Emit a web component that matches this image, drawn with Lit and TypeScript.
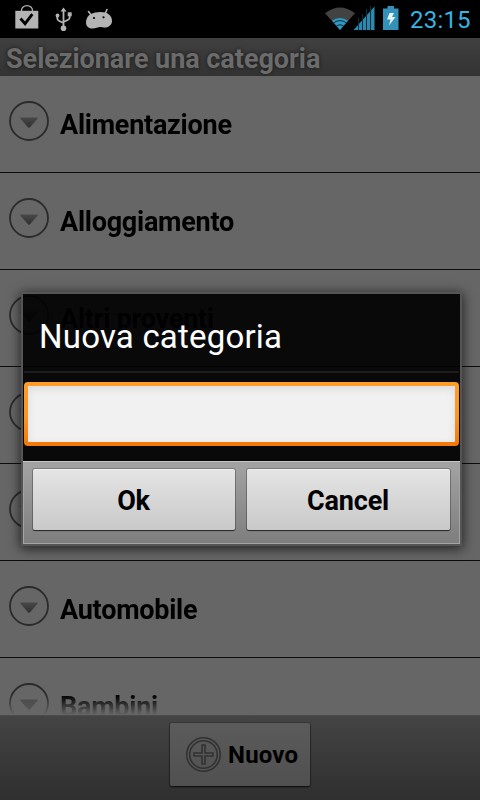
import { LitElement, html, css } from "lit";
import { customElement, property } from "lit/decorators.js";

@customElement("status-bar")
class StatusBar extends LitElement {
  static styles = css`
    :host { display: flex; height: 38px; background: #000; justify-content: space-between; }
    svg { display: block; }
    .side { display: flex; }
    .clock {
      width: 61px; margin-left: 10px; margin-right: 9px; white-space: nowrap;
      font: 400 24px/41px Roboto, sans-serif; letter-spacing: 0.2px; color: #33b5e5;
    }
  `;
  render() {
    return html`
      <svg width="120" height="38" viewBox="0 0 120 38">
        <path d="M21.500 11V10.500a5.500 4.800 0 0 1 11 0V11" fill="none" stroke="#b4b4b4" stroke-width="1.300"/>
        <path d="M15.300 10.800H38.300V28.500H15.300Z" fill="#b4b4b4"/>
        <path d="M20.500 18.500l4.600 5.200 7.200-9.500" fill="none" stroke="#000" stroke-width="2.800"/>
        <g fill="none" stroke="#b4b4b4" stroke-width="1.800">
          <path d="M63.500 10V28M57.300 16v2.500q0 1.500 2 2.500l4.200 2M69.700 15v2.500q0 1.500-2 2.500l-4.200 2"/>
        </g>
        <path d="M63.500 7.500l3 4h-6Z" fill="#b4b4b4"/>
        <circle cx="57.500" cy="15.500" r="1.900" fill="#b4b4b4"/>
        <path d="M67.700 12.300h4v4h-4Z" fill="#b4b4b4"/>
        <circle cx="63.500" cy="28.300" r="2.800" fill="#b4b4b4"/>
        <path d="M88.500 11.500l3 4M107 9.500l-2 4.500" stroke="#b4b4b4" stroke-width="1.600" stroke-linecap="round"/>
        <path d="M86 22.500C86 16.500 90 12.800 98 12.200C107 11.500 112 15 112 21c0 4-3.500 6.600-7.500 6.600-1.500 0-2.500-.6-4.500-.6s-4 1.500-7.500 1.500S86 26.500 86 22.500Z" fill="#b4b4b4"/>
        <circle cx="94" cy="18" r="1.100"/><circle cx="103.500" cy="17.300" r="1.100"/>
      </svg>
      <div class="side">
        <svg width="75" height="38" viewBox="0 0 75 38">
          <path d="M0 13.300Q15 1.500 30 13.300L15 30Z" fill="#424242"/>
          <path d="M7 20.600Q15 15.300 23 20.600L15 30Z" fill="#3099c4"/>
          <path d="M8.800 22.700q6.200-4.200 12.400 0M11.500 25.800q3.500-2.200 7 0" fill="none" stroke="#0b2c3a" stroke-width="1"/>
          <path d="M28.500 30L49.500 6.500V30Z" fill="#2b89ae"/>
          <path d="M33.500 18v12.500M37.500 14v16.500M41.500 9v21.500M45.500 6v24.500" stroke="#0a3040" stroke-width="1"/>
          <path d="M62.500 6h6.500v2.500h4.500V30h-15.500V8.500h4.500Z" fill="#3492b8"/>
          <path d="M64.500 13h4.500l-2 4h3.500l-6.500 8.500 1.500-6h-3.500Z" fill="#e6f3f8"/>
        </svg>
        <div class="clock">23:15</div>
      </div>`;
  }
}

@customElement("category-row")
class CategoryRow extends LitElement {
  @property() label = "";
  static styles = css`
    :host {
      display: flex; box-sizing: border-box; flex: none; height: 97px;
      border-bottom: 1px solid #0c0c0c; padding-left: 8px;
    }
    svg { display: block; margin-top: 24px; }
    .label {
      margin-left: 10px; font: 700 27px/99px Roboto, sans-serif;
      letter-spacing: -0.25px; color: #000; white-space: nowrap;
    }
  `;
  render() {
    return html`
      <svg width="42" height="42" viewBox="0 0 42 42">
        <defs><linearGradient id="g" x1="0" y1="0" x2="0" y2="1">
          <stop offset="0" stop-color="#484848"/><stop offset="1" stop-color="#303030"/>
        </linearGradient></defs>
        <circle cx="21" cy="21" r="19" fill="none" stroke="#2b2b2b" stroke-width="1.800"/>
        <path d="M13 17.500h16q1.500 0 .5 1.200l-7.500 8.600q-1 1-2 0l-7.500-8.600q-1-1.200 .5-1.200Z" fill="url(#g)"/>
      </svg>
      <div class="label">${this.label}</div>`;
  }
}

@customElement("category-dialog")
class CategoryDialog extends LitElement {
  static styles = css`
    :host {
      display: flex; flex-direction: column; box-sizing: border-box;
      width: 441px; height: 254px; border: 2px solid #555; border-radius: 2px;
      box-shadow: 0 2px 12px 1px rgba(0, 0, 0, .65);
    }
    .top {
      height: 167px; flex: none; padding: 0 1px; box-sizing: border-box;
      background: rgba(0, 0, 0, .905);
    }
    .title {
      height: 77px; box-sizing: border-box; padding-left: 15px; color: #fff; white-space: nowrap;
      font: 400 33px/85px Roboto, sans-serif; letter-spacing: 0.2px;
    }
    .rule { height: 2px; background: #1d1d1d; }
    .field {
      height: 64px; margin-top: 9px; padding: 4px; box-sizing: border-box; border-radius: 4px;
      background: linear-gradient(#ff9d2a, #fb9422 55%, #f27a0a 95%);
    }
    .inner { height: 56px; background: #f1f1f1; box-shadow: inset 0 3px 8px rgba(0, 0, 0, .09); }
    .actions {
      flex: 1; display: flex; justify-content: space-between; padding: 7px 10px 12px; box-sizing: border-box;
      border-top: 1px solid #c4c4c4; border-bottom: 1px solid #a4a4a4;
      background: linear-gradient(#a3a3a3, #7e7e7e);
      box-shadow: inset 1px 0 #a4a4a4, inset -1px 0 #a4a4a4;
    }
    .btn {
      width: 202px; height: 61px; box-sizing: border-box; border-radius: 2px; text-align: center;
      color: #000; background: linear-gradient(#e4e4e4, #c9c9c9); border-top: 1px solid #f0f0f0;
      font: 700 27px/63px Roboto, sans-serif; letter-spacing: -0.15px; text-indent: -1px;
      box-shadow: 0 0 0 1px rgba(0, 0, 0, .22), 0 1px 1px rgba(0, 0, 0, .65);
    }
    .btn + .btn { width: 203px; }
  `;
  render() {
    return html`
      <div class="top">
        <div class="title">Nuova categoria</div>
        <div class="rule"></div>
        <div class="field"><div class="inner"></div></div>
      </div>
      <div class="actions">
        <div class="btn">Ok</div>
        <div class="btn">Cancel</div>
      </div>`;
  }
}

@customElement("app-root")
class AppRoot extends LitElement {
  static styles = css`
    :host {
      display: flex; flex-direction: column; position: relative; width: 480px; height: 800px;
      overflow: hidden; background: #666; font-family: Roboto, sans-serif;
    }
    .header {
      height: 38px; flex: none; box-sizing: border-box; padding-left: 6px; white-space: nowrap;
      background: linear-gradient(#404040, #333); color: #6b6b6b; letter-spacing: -0.04px;
      font: 700 27px/43px Roboto, sans-serif; text-shadow: 0 0 4px rgba(0, 0, 0, .6);
    }
    .list { flex: 1; min-height: 0; overflow: hidden; display: flex; flex-direction: column;
      -webkit-mask-image: linear-gradient(#000 calc(100% - 20px), transparent); }
    .footer {
      height: 85px; flex: none; box-sizing: border-box; padding-top: 7px; display: flex; justify-content: center;
      background: linear-gradient(#444, #2f2f2f); border-top: 1px solid #4c4c4c;
    }
    .new {
      width: 140px; height: 63px; display: flex; align-items: center; box-sizing: border-box;
      padding-left: 15px; border-radius: 2px; background: linear-gradient(#5b5b5b, #505050);
      box-shadow: 0 0 0 1px rgba(0, 0, 0, .15), 0 1px 2px rgba(0, 0, 0, .8);
    }
    .new svg { margin-bottom: 1px; }
    .new span { margin-left: 6px; font-weight: 700; font-size: 24px; letter-spacing: 0.2px; color: #000; white-space: nowrap; }
    .modal { position: absolute; left: 21px; top: 292px; }
  `;
  render() {
    const rows = ["Alimentazione", "Alloggiamento", "Altri proventi", "", "", "Automobile", "Bambini"];
    return html`
      <status-bar></status-bar>
      <div class="header">Selezionare una categoria</div>
      <div class="list">${rows.map((r) => html`<category-row .label=${r}></category-row>`)}</div>
      <div class="footer">
        <div class="new">
          <svg width="37" height="37" viewBox="0 0 37 37" fill="none" stroke="#323232" stroke-width="1.600">
            <circle cx="18.500" cy="18.500" r="16.800"/>
            <circle cx="18.500" cy="18.500" r="13.800"/>
            <path d="M17 9h3v8h8v3h-8v8h-3v-8H9v-3h8Z"/>
          </svg>
          <span>Nuovo</span>
        </div>
      </div>
      <category-dialog class="modal"></category-dialog>`;
  }
}
